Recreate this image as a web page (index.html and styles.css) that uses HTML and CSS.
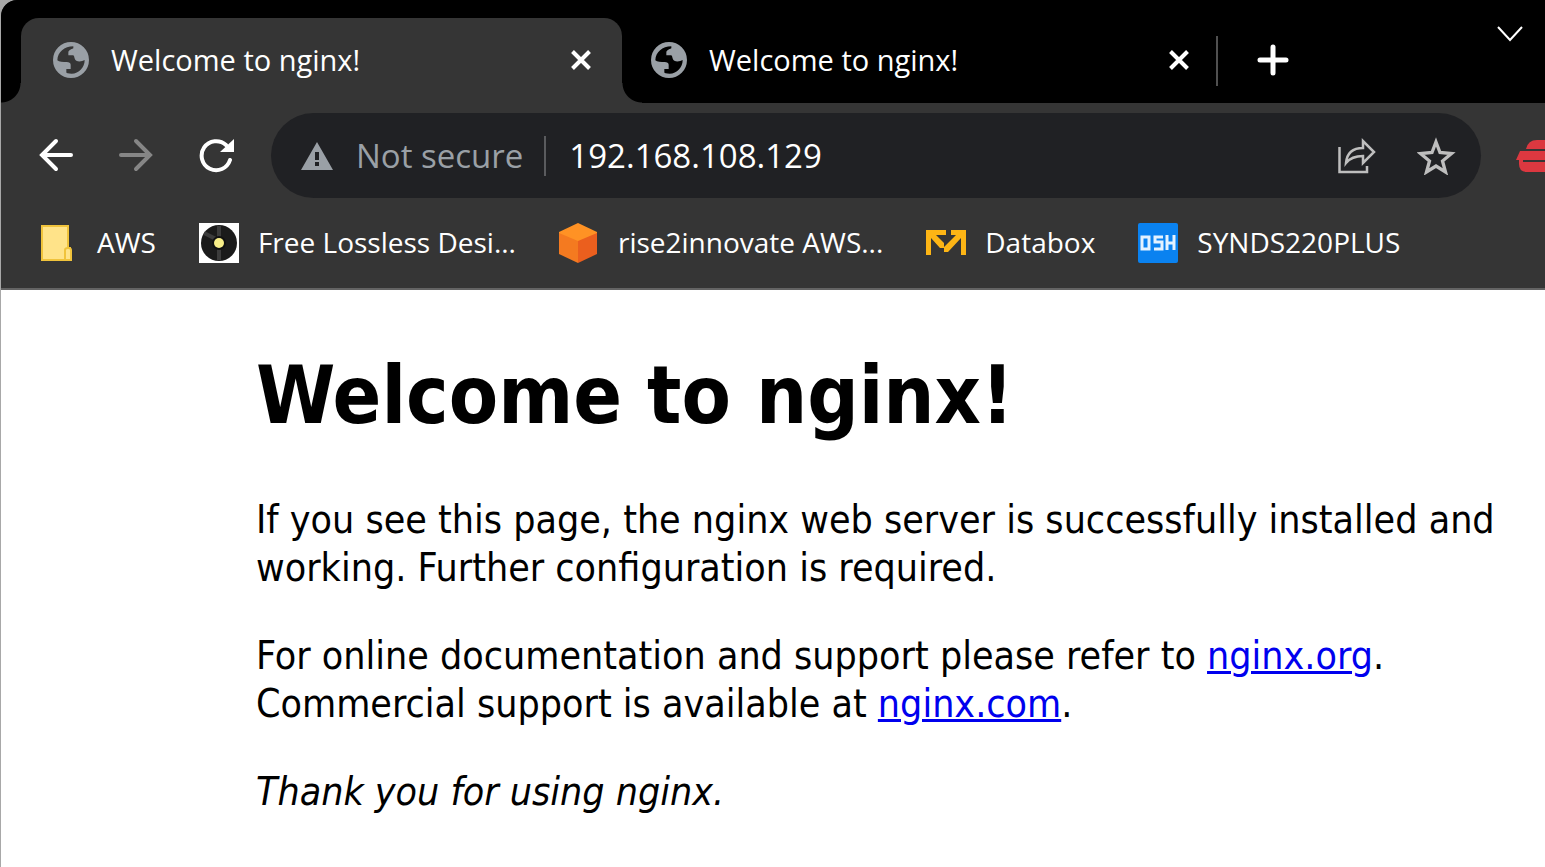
FILE: index.html
```html
<!DOCTYPE html>
<html lang="en">
<head>
<meta charset="utf-8">
<title>Welcome to nginx!</title>
<link rel="stylesheet" href="styles.css">
</head>
<body>
<svg class="defs" aria-hidden="true">
  <symbol id="globe" viewBox="0 0 108 108">
    <path fill="#9aa0a6" fill-rule="evenodd" d="M54 0a54 54 0 1 0 0 108a54 54 0 1 0 0-108zM13 55C14 30 34 13 61 13V19C54 22 46 25 46 32V40H60C66 41 62 51 70 56C77 60 88 58 95 54C95 76 78 95 56 95C46 95 40 94 40 91V81H53V68C53 62 48 61 41 60C30 60 18 60 13 55Z"/>
  </symbol>
  <symbol id="cross" viewBox="0 0 20 20">
    <path d="M1.500 1.500l17 17M18.500 1.500l-17 17" stroke="#fff" stroke-width="4"/>
  </symbol>
</svg>
<div class="window">
  <header class="chrome">
    <div class="tabs">
      <div class="tab active">
        <svg class="favicon"><use href="#globe"/></svg>
        <span class="title">Welcome to nginx!</span>
        <button class="close" aria-label="Close tab"><svg class="x"><use href="#cross"/></svg></button>
      </div>
      <div class="tab">
        <svg class="favicon"><use href="#globe"/></svg>
        <span class="title">Welcome to nginx!</span>
        <button class="close" aria-label="Close tab"><svg class="x"><use href="#cross"/></svg></button>
      </div>
      <button class="new-tab" aria-label="New tab"><svg width="32" height="32" viewBox="0 0 32 32"><path d="M16 3v26M3 16h26" stroke="#fff" stroke-width="5" stroke-linecap="round"/></svg></button>
      <button class="search-tabs" aria-label="Search tabs"><svg width="26" height="16" viewBox="0 0 26 16"><path d="M1 1l12 13L25 1" fill="none" stroke="#fff" stroke-width="2"/></svg></button>
    </div>
    <div class="toolbar">
      <div class="nav">
        <button aria-label="Back"><svg width="36" height="36" viewBox="0 0 36 36"><path d="M33 18H5M18 4L4 18l14 14" fill="none" stroke="#fff" stroke-width="4" stroke-linecap="round"/></svg></button>
        <button aria-label="Forward"><svg width="36" height="36" viewBox="0 0 36 36"><path d="M3 18h28M18 4l14 14-14 14" fill="none" stroke="#868686" stroke-width="4" stroke-linecap="round"/></svg></button>
        <button aria-label="Reload"><svg width="36" height="36" viewBox="0 0 36 36"><path d="M28 8A14.500 14.500 0 1 0 32 23" fill="none" stroke="#fff" stroke-width="4" stroke-linecap="round"/><path d="M36 2v13H22z" fill="#fff"/></svg></button>
      </div>
      <div class="omnibox">
        <svg width="32" height="28" viewBox="0 0 32 28"><path fill="#9aa0a6" fill-rule="evenodd" d="M16 0l16 28H0zM14 10v8h4v-8zM14 20v4h4v-4z"/></svg>
        <span class="status">Not secure</span>
        <input class="url" type="text" aria-label="Address" value="192.168.108.129">
        <button class="action" aria-label="Share"><svg width="40" height="38" viewBox="0 0 40 38"><path d="M2.500 10v25H30v-6M9 26c1-11 8-15 17-15V4l11 11-11 11v-7c-8 0-13 2-17 7z" fill="none" stroke="#bebebe" stroke-width="2.500"/></svg></button>
        <button class="action" aria-label="Bookmark"><svg width="40" height="38" viewBox="0 0 40 38"><path d="M19 5l4 10.500 11.500 1-9 7.500 3 11-9.500-6-9.500 6 3-11-9-7.500 11.500-1z" fill="none" stroke="#bebebe" stroke-width="3.300"/></svg></button>
      </div>
      <button class="extension" aria-label="Extension"><svg width="30" height="34" viewBox="0 0 30 34"><path fill="#dc3840" d="M11 10Q13 1 22 1H30V10zM5 12H30V21H8V22H30V33H12Q4 33 4 25V21H1z"/><path d="M8 22.500H30" stroke="#353535"/></svg></button>
    </div>
    <nav class="bookmarks">
      <a href="#"><svg width="40" height="40" viewBox="0 0 40 40"><path d="M4 3h26v22h2v12H4z" fill="#ffe389" stroke="#f0c33c" stroke-width="2"/><path d="M27 37V27q0-2 3-2t3 2v10z" fill="#ffe389" stroke="#f0c33c" stroke-width="2"/></svg>AWS</a>
      <a href="#"><svg width="40" height="40" viewBox="0 0 40 40"><path fill="#fff" d="M0 0h40v40H0z"/><circle cx="20" cy="20" r="18" fill="#1b1b1b"/><path d="M20 3v34M5 10l12 6" stroke="#3c3c3c" stroke-width="4"/><circle cx="20" cy="20" r="7" fill="#111"/><circle cx="20" cy="20" r="5" fill="#f8ee88"/></svg>Free Lossless Desi...</a>
      <a href="#"><svg width="40" height="40" viewBox="0 0 40 40"><path fill="#ff9224" d="M19 0l19 9v2L19 20 0 11V9z"/><path fill="#f47a20" d="M0 10l19 8v22L0 31z"/><path fill="#eb5f1e" d="M38 10l-19 8v22l19-9z"/></svg>rise2innovate AWS...</a>
      <a href="#"><svg width="40" height="40" viewBox="0 0 40 40"><path fill="#fdb515" d="M0 7h20v5H10l8 8v5h-4L5 15v17H0zM25 7h15v25h-5V15L22 29h-4v-5L30 12h-5z"/></svg>Databox</a>
      <a href="#"><svg width="40" height="40" viewBox="0 0 40 40"><rect width="40" height="40" rx="2" fill="#0a82f0"/><path d="M4 14h7v12H4zM25 14h-8v5h7v7h-8M29 12v15M36 12v15M29 20h8" fill="none" stroke="#e3f2ff" stroke-width="3"/></svg>SYNDS220PLUS</a>
    </nav>
  </header>
  <main class="page">
    <h1>Welcome to nginx!</h1>
    <p>If you see this page, the nginx web server is successfully installed and working. Further configuration is required.</p>
    <p>For online documentation and support please refer to <a href="#">nginx.org</a>.<br>Commercial support is available at <a href="#">nginx.com</a>.</p>
    <p><em>Thank you for using nginx.</em></p>
  </main>
</div>
</body>
</html>
```
FILE: styles.css
```css
* { box-sizing: border-box; }
body { margin: 0; background: #a8a8a8; }
svg { display: block; flex: none; }
.defs { position: absolute; width: 0; height: 0; }
button { border: 0; padding: 0; background: none; display: flex; align-items: center; justify-content: center; flex: none; }

.window { margin-left: 1px; min-height: 100vh; background: #fff; border-radius: 16px 0 0 0; overflow: hidden; }
.chrome { background: #353535; color: #fff; font: 28px/40px "Open Sans", "Noto Sans", sans-serif; border-bottom: 2px solid #646464; }

.tabs { display: flex; background: #000; padding: 18px 20px 0; height: 103px; }
.tab { position: relative; display: flex; align-items: center; flex: 0 1 601px; padding: 0 26px 2px 32px; height: 85px; border-radius: 18px 18px 0 0; }
.tab:not(.active) { flex-basis: 594px; padding-left: 29px; padding-right: 22px; border-radius: 0; }
.active { background: #353535; }
.active::before, .active::after { content: ""; position: absolute; bottom: 0; width: 20px; height: 20px; }
.active::before { right: 100%; background: radial-gradient(circle at 0 0, #000 19px, #353535 20px); }
.active::after { left: 100%; background: radial-gradient(circle at 100% 0, #000 19px, #353535 20px); }
.favicon { width: 36px; height: 36px; }
.title { flex: 1; margin-left: 22px; font-size: 29px; white-space: nowrap; }
.close { width: 30px; height: 30px; }
.x { width: 20px; height: 20px; }
.new-tab { width: 112px; height: 50px; margin-top: 18px; padding-bottom: 2px; border-left: 2px solid #505050; }
.search-tabs { width: 30px; height: 32px; margin-left: auto; }

.toolbar { display: flex; padding: 10px 0 10px 15px; }
.nav { display: flex; margin-right: 15px; padding-bottom: 2px; }
.nav button { width: 80px; }
.omnibox { flex: 1; min-width: 0; height: 85px; display: flex; align-items: center; border-radius: 43px; background: #202124; padding: 0 24px 0 30px; font-size: 33px; }
.status { margin-left: 23px; padding-right: 21px; border-right: 2px solid #5a5b5e; color: #9aa0a6; white-space: nowrap; }
.url { flex: 1; min-width: 0; margin-left: 23px; padding: 0; border: 0; background: none; color: #fff; font: inherit; }
.action { width: 40px; margin-left: 40px; }
.extension { width: 64px; justify-content: flex-end; }

.bookmarks { display: flex; gap: 43px; padding: 15px 37px 25px; line-height: 38px; }
.bookmarks a { display: flex; align-items: flex-start; gap: 19px; color: #fff; text-decoration: none; white-space: nowrap; }

.page { padding: 58px 32px 22px 255px; color: #000; font: 39px/48px "DejaVu Sans Condensed", "Noto Sans", sans-serif; }
h1 { margin: 0 0 52px; font-size: 80px; line-height: 96px; }
p { margin: 0 0 40px; }
.page a { color: #00e; text-decoration: underline; text-decoration-thickness: 3px; }
```
